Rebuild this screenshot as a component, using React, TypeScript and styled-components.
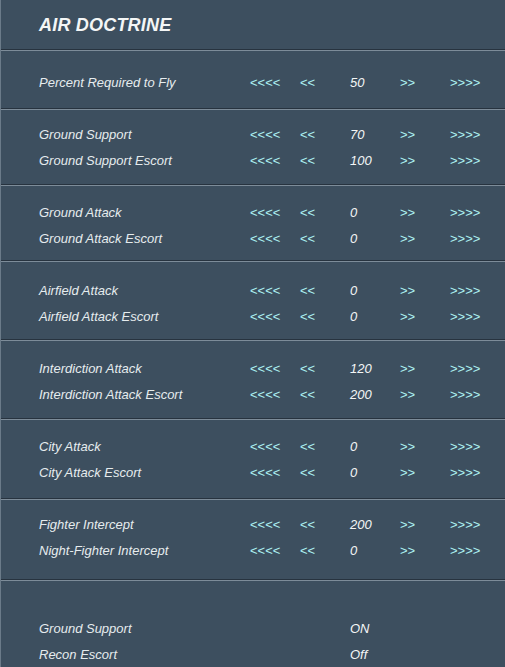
import React from "react";
import styled, { createGlobalStyle } from "styled-components";

const GlobalStyle = createGlobalStyle`
  html, body {
    margin: 0;
    padding: 0;
    background: #3d4f5f;
  }
  body {
    font-family: "Liberation Sans", Arial, sans-serif;
  }
`;

type Slider = { label: string; value: number };
type Toggle = { label: string; value: string };
type Block = { top: number; bottom: number; rows: Slider[] };

// spacing read off the original screen, it isn't perfectly even
const sections: Block[] = [
  { top: 19, bottom: 13, rows: [{ label: "Percent Required to Fly", value: 50 }] },
  {
    top: 12,
    bottom: 11,
    rows: [
      { label: "Ground Support", value: 70 },
      { label: "Ground Support Escort", value: 100 },
    ],
  },
  {
    top: 14,
    bottom: 9,
    rows: [
      { label: "Ground Attack", value: 0 },
      { label: "Ground Attack Escort", value: 0 },
    ],
  },
  {
    top: 16,
    bottom: 10,
    rows: [
      { label: "Airfield Attack", value: 0 },
      { label: "Airfield Attack Escort", value: 0 },
    ],
  },
  {
    top: 15,
    bottom: 11,
    rows: [
      { label: "Interdiction Attack", value: 120 },
      { label: "Interdiction Attack Escort", value: 200 },
    ],
  },
  {
    top: 14,
    bottom: 13,
    rows: [
      { label: "City Attack", value: 0 },
      { label: "City Attack Escort", value: 0 },
    ],
  },
  {
    top: 12,
    bottom: 16,
    rows: [
      { label: "Fighter Intercept", value: 200 },
      { label: "Night-Fighter Intercept", value: 0 },
    ],
  },
];

const toggles: Toggle[] = [
  { label: "Ground Support", value: "ON" },
  { label: "Recon Escort", value: "Off" },
];

const App = () => {
  return (
    <>
      <GlobalStyle />
      <Panel>
        <Header>
          <Title>AIR DOCTRINE</Title>
        </Header>
        {sections.map((block, i) => (
          <Section key={i} top={block.top} bottom={block.bottom}>
            {block.rows.map((row) => (
              <Row key={row.label}>
                <Label>{row.label}</Label>
                <Arrow>{"<<<<"}</Arrow>
                <Arrow>{"<<"}</Arrow>
                <Value>{row.value}</Value>
                <Arrow>{">>"}</Arrow>
                <Arrow>{">>>>"}</Arrow>
              </Row>
            ))}
          </Section>
        ))}
        <Section top={35} bottom={20}>
          {toggles.map((t) => (
            <Row key={t.label}>
              <Label>{t.label}</Label>
              <span />
              <span />
              <Value>{t.value}</Value>
            </Row>
          ))}
        </Section>
      </Panel>
    </>
  );
};

export default App;

const Panel = styled.div`
  width: 505px;
  min-height: 667px;
  box-sizing: border-box;
  background-color: #3d4f5f;
  border-left: 1px solid #6b7b89;
`;

const Header = styled.div`
  height: 49px;
  display: flex;
  align-items: center;
  padding-left: 38px;
`;

const Title = styled.h1`
  margin: 0 0 -2px;
  font-size: 18px;
  font-weight: bold;
  font-style: italic;
  color: #f4f6f6;
  letter-spacing: 0.2px;
`;

const Section = styled.div<{ top: number; bottom: number }>`
  border-top: 1px solid #27333f;
  box-shadow: inset 0 1px 0 #7d8c99;
  padding: ${({ top }) => top}px 0 ${({ bottom }) => bottom}px 38px;
`;

const Row = styled.div`
  display: grid;
  grid-template-columns: 211px 50px 50px 50px 50px 50px;
  align-items: center;
  height: 26px;
  font-size: 13px;
  font-style: italic;
`;

const Label = styled.span`
  color: #e6ecee;
  white-space: nowrap;
`;

const Arrow = styled.span`
  color: #aef2f2;
  font-style: normal;
`;

const Value = styled.span`
  color: #f4f6f6;
`;
